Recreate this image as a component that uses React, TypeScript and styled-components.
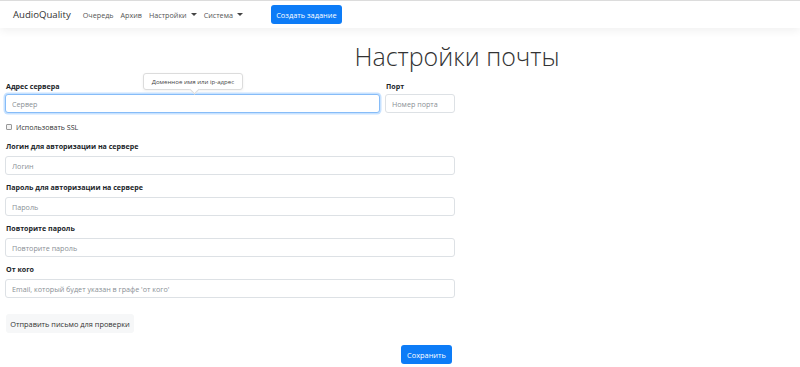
import React from "react";
import styled, { createGlobalStyle } from "styled-components";

const Global = createGlobalStyle`
  html, body { margin: 0; padding: 0; background: #fff; }
  body { font-family: "Open Sans", "Noto Sans", sans-serif; color: #212529; }
  * { box-sizing: border-box; }
`;

const Nav = styled.nav`
  height: 28px;
  border-top: 1px solid #dcdcdc;
  display: flex;
  align-items: center;
  padding-left: 13px;
  background: #fff;
  box-shadow: 0 3px 9px rgba(0, 0, 0, 0.06);
  position: relative;
  z-index: 1;
`;

const Brand = styled.span`
  font-size: 9.6px;
  color: #333;
  margin-right: 12px;
`;

const NavLink = styled.span`
  font-size: 7.2px;
  color: #555;
  margin-right: 7px;
  display: inline-flex;
  align-items: center;
`;

const Caret = styled.span`
  display: inline-block;
  margin-left: 4px;
  width: 0;
  height: 0;
  border-left: 3px solid transparent;
  border-right: 3px solid transparent;
  border-top: 3px solid #444;
`;

const Btn = styled.button<{ $variant?: "primary" | "light" }>`
  font-family: inherit;
  font-size: 7.4px;
  white-space: nowrap;
  border: none;
  border-radius: 3px;
  height: 19px;
  padding: 0;
  color: ${(p) => (p.$variant === "light" ? "#333" : "#fff")};
  background: ${(p) => (p.$variant === "light" ? "#f6f7f8" : "#0d7cf7")};
  cursor: pointer;
`;

const NavButton = styled(Btn)`
  margin-left: 21px;
  width: 71px;
`;

const Title = styled.h1`
  margin: 10px 0 6px;
  padding-left: 114px;
  text-align: center;
  font-weight: 300;
  font-size: 25px;
  line-height: 36px;
  color: #333;
`;

const Form = styled.form`
  width: 455px;
  padding-left: 5px;
`;

const Row = styled.div`
  display: flex;
  gap: 5px;
`;

const Group = styled.div<{ $width?: number }>`
  position: relative;
  flex: ${(p) => (p.$width ? `0 0 ${p.$width}px` : "1")};
  margin-bottom: 6px;
`;

const Label = styled.label<{ $tight?: boolean }>`
  display: block;
  font-size: 7.1px;
  font-weight: 700;
  line-height: 12px;
  margin: 0 0 ${(p) => (p.$tight ? 2 : 4)}px 1px;
  color: #212529;
`;

const Input = styled.input<{ $focus?: boolean }>`
  display: block;
  width: 100%;
  height: 19px;
  font-family: inherit;
  font-size: 7.2px;
  padding: 0 6px;
  border: 1px solid ${(p) => (p.$focus ? "#86bcf8" : "#dde1e5")};
  border-radius: 3px;
  outline: none;
  box-shadow: ${(p) => (p.$focus ? "0 0 0 1.5px rgba(0,123,255,0.22)" : "none")};
  &::placeholder { color: #8a9096; }
`;

const Tooltip = styled.div`
  position: absolute;
  left: 138px;
  top: -7px;
  width: 100px;
  height: 17px;
  border: 1px solid #dcdcdc;
  border-radius: 3px;
  background: #fff;
  font-size: 6.1px;
  color: #444;
  display: flex;
  align-items: center;
  justify-content: center;
  box-shadow: 0 1px 3px rgba(0, 0, 0, 0.06);
  &::after {
    content: "";
    position: absolute;
    left: 47px;
    bottom: -4px;
    width: 6px;
    height: 6px;
    background: #fff;
    border-right: 1px solid #dcdcdc;
    border-bottom: 1px solid #dcdcdc;
    transform: rotate(45deg);
  }
`;

const CheckRow = styled.div`
  display: flex;
  align-items: center;
  gap: 4px;
  height: 12px;
  margin: 2px 0 7px 1px;
  font-size: 7.1px;
  color: #333;
`;

const Box = styled.span`
  width: 6px;
  height: 6px;
  border: 1px solid #999;
  border-radius: 1px;
  background: #f4f4f4;
`;

const SendButton = styled(Btn)`
  margin: 10px 0 0 1px;
  width: 128px;
`;

const SaveRow = styled.div`
  display: flex;
  justify-content: flex-end;
  padding-right: 3px;
  margin-top: 12px;
`;

const SaveButton = styled(Btn)`
  width: 51px;
`;

const fields = [
  { label: "Логин для авторизации на сервере", ph: "Логин" },
  { label: "Пароль для авторизации на сервере", ph: "Пароль" },
  { label: "Повторите пароль", ph: "Повторите пароль" },
  { label: "От кого", ph: "Email, который будет указан в графе 'от кого'" },
];

export default function App() {
  return (
    <>
      <Global />
      <Nav>
        <Brand>AudioQuality</Brand>
        <NavLink>Очередь</NavLink>
        <NavLink>Архив</NavLink>
        <NavLink>
          Настройки<Caret />
        </NavLink>
        <NavLink>
          Система<Caret />
        </NavLink>
        <NavButton>Создать задание</NavButton>
      </Nav>
      <Title>Настройки почты</Title>
      <Form onSubmit={(e) => e.preventDefault()}>
        <Row>
          <Group>
            <Label $tight>Адрес сервера</Label>
            <Tooltip>Доменное имя или ip-адрес</Tooltip>
            <Input $focus placeholder="Сервер" />
          </Group>
          <Group $width={70}>
            <Label $tight>Порт</Label>
            <Input placeholder="Номер порта" />
          </Group>
        </Row>
        <CheckRow>
          <Box />
          Использовать SSL
        </CheckRow>
        {fields.map((f) => (
          <Group key={f.label}>
            <Label>{f.label}</Label>
            <Input placeholder={f.ph} />
          </Group>
        ))}
        <SendButton type="button" $variant="light">
          Отправить письмо для проверки
        </SendButton>
        <SaveRow>
          <SaveButton type="submit">Сохранить</SaveButton>
        </SaveRow>
      </Form>
    </>
  );
}
